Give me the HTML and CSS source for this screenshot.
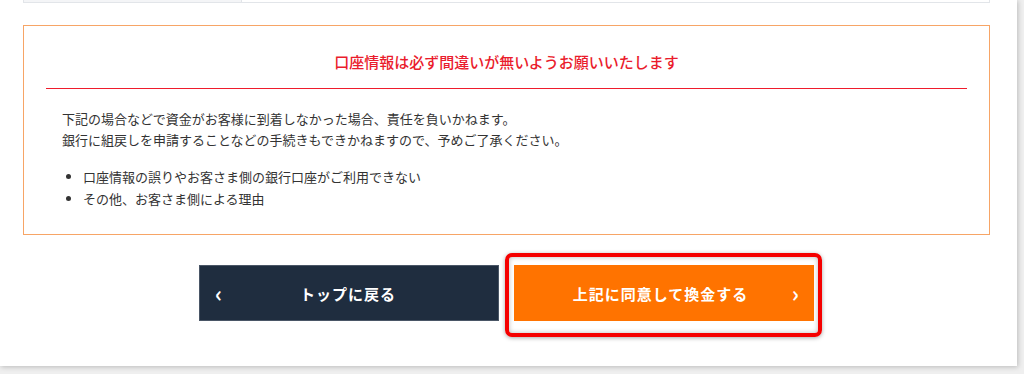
FILE: index.html
```html
<!DOCTYPE html>
<html lang="ja">
<head>
<meta charset="utf-8">
<link rel="stylesheet" href="styles.css">
</head>
<body>
<div class="card">
  <div class="table-edge">
    <div class="cell-head"></div>
    <div class="cell-body"></div>
  </div>
  <section class="notice">
    <h2 class="notice-title">口座情報は必ず間違いが無いようお願いいたします</h2>
    <p class="notice-text">下記の場合などで資金がお客様に到着しなかった場合、責任を負いかねます。<br>銀行に組戻しを申請することなどの手続きもできかねますので、予めご了承ください。</p>
    <ul class="notice-list">
      <li>口座情報の誤りやお客さま側の銀行口座がご利用できない</li>
      <li>その他、お客さま側による理由</li>
    </ul>
  </section>
  <div class="actions">
    <a class="btn btn-back" href="#"><span class="chev chev-left">&lsaquo;</span><span class="btn-label">トップに戻る</span></a>
    <div class="highlight-wrap">
      <a class="btn btn-go" href="#"><span class="btn-label">上記に同意して換金する</span><span class="chev chev-right">&rsaquo;</span></a>
      <div class="annot"></div>
    </div>
  </div>
</div>
</body>
</html>
```
FILE: styles.css
```css
* { box-sizing: border-box; }
html, body { margin: 0; padding: 0; }
body {
  background: #efefef;
  width: 1024px;
  height: 374px;
  overflow: hidden;
  font-family: "Noto Sans CJK JP", "Noto Sans", sans-serif;
  color: #333;
}
.card {
  width: 1017px;
  height: 366px;
  background: #fff;
  box-shadow: 1px 1px 5px rgba(0,0,0,0.22);
  padding: 0 27px 0 23px;
}
.table-edge {
  display: flex;
  height: 3px;
  border: 1px solid #e2e5e9;
  border-top: none;
}
.cell-head { width: 218px; background: #f4f5f7; border-right: 1px solid #e2e5e9; }
.cell-body { flex: 1; }
.notice {
  margin-top: 22px;
  border: 1px solid #f7a566;
  padding: 0 22px 24px;
}
.notice-title {
  margin: 0;
  padding: 25px 0 15px;
  border-bottom: 1px solid #ef1c2c;
  text-align: center;
  font-size: 15px;
  line-height: 22px;
  font-weight: 500;
  color: #ea1c2c;
}
.notice-text {
  margin: 19px 0 0;
  padding-left: 16px;
  font-size: 13px;
  line-height: 21px;
}
.notice-list {
  margin: 16px 0 0;
  padding-left: 37px;
  font-size: 13px;
  line-height: 22px;
}
.actions {
  display: flex;
  justify-content: center;
  gap: 15px;
  margin-top: 30px;
}
.btn {
  position: relative;
  display: flex;
  align-items: center;
  justify-content: center;
  width: 300px;
  height: 56px;
  color: #fff;
  text-decoration: none;
  font-weight: bold;
  font-size: 15px;
  letter-spacing: 1px;
}
.btn-back { background: #1f2d3f; border: 1px solid #4a5666; }
.btn-go { background: #ff7300; }
.btn-back .btn-label { margin-left: -2px; }
.btn-go .btn-label { margin-left: -7px; }
.chev {
  position: absolute;
  top: 50%;
  transform: translateY(-54%);
  font-size: 22px;
  font-weight: bold;
  line-height: 1;
}
.chev-left { left: 15px; }
.chev-right { right: 14px; }
.highlight-wrap { position: relative; }
.annot {
  position: absolute;
  top: -12px;
  left: -9px;
  right: -8px;
  bottom: -16px;
  border: 4px solid #f50000;
  border-radius: 7px;
  box-shadow: 0 1px 4px rgba(0,0,0,0.35), inset 0 0 5px rgba(0,0,0,0.28);
  pointer-events: none;
}
```
